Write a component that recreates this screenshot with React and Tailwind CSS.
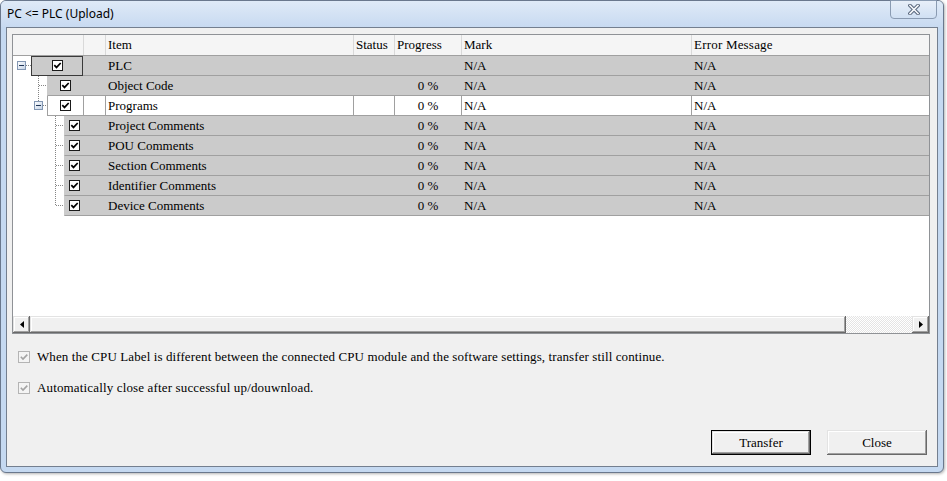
import React from "react";

// Raised 3D edge used by classic push buttons and scroll bar parts
const BEVEL =
  "bg-[#f0f0f0] shadow-[inset_-1px_-1px_0_#696969,inset_1px_1px_0_#e3e3e3,inset_-2px_-2px_0_#a0a0a0,inset_2px_2px_0_#ffffff]";

function Check() {
  return (
    <span className="flex h-[11px] w-[11px] items-center justify-center border border-[#1a1a1a] bg-white">
      <svg width="9" height="9" viewBox="0 0 9 9">
        <path d="M1.3 4.1 L3.5 6.4 L7.7 2" fill="none" stroke="#000" strokeWidth="1.7" />
      </svg>
    </span>
  );
}

function DisabledCheck() {
  return (
    <span className="flex h-[12px] w-[12px] flex-none items-center justify-center border border-[#b4b4b4] bg-[#f4f4f4]">
      <svg width="10" height="10" viewBox="0 0 10 10">
        <path d="M1.8 4.8 L4 7 L8.3 2.6" fill="none" stroke="#a3a3a3" strokeWidth="1.6" />
      </svg>
    </span>
  );
}

function Dots({ x1, y1, x2, y2 }) {
  return (
    <line
      x1={x1}
      y1={y1}
      x2={x2}
      y2={y2}
      stroke="#858585"
      strokeDasharray="1 1"
      shapeRendering="crispEdges"
    />
  );
}

function Expander({ x, y, id }) {
  return (
    <g>
      <defs>
        <linearGradient id={id} x1="0" y1="0" x2="1" y2="1">
          <stop offset="0" stopColor="#ffffff" />
          <stop offset="1" stopColor="#c3d2e6" />
        </linearGradient>
      </defs>
      <rect x={x + 0.5} y={y + 0.5} width="8" height="8" fill={`url(#${id})`} stroke="#8397b3" shapeRendering="crispEdges" />
      <line x1={x + 2} y1={y + 4.5} x2={x + 7} y2={y + 4.5} stroke="#1f3556" shapeRendering="crispEdges" />
    </g>
  );
}

// Tree connector drawings for the white gutter left of each row
function Gutter({ kind, last }) {
  if (kind === "root") {
    return (
      <svg width="18" height="20" className="flex-none">
        <Expander x={4} y={5} id="exp-root" />
        <Dots x1={13} y1={9.5} x2={18} y2={9.5} />
      </svg>
    );
  }
  if (kind === "leaf1") {
    return (
      <svg width="34" height="20" className="flex-none">
        <Dots x1={25.5} y1={0} x2={25.5} y2={20} />
        <Dots x1={26} y1={9.5} x2={34} y2={9.5} />
      </svg>
    );
  }
  if (kind === "node1") {
    return (
      <svg width="34" height="20" className="flex-none">
        <Dots x1={25.5} y1={0} x2={25.5} y2={5} />
        <Expander x={21} y={5} id="exp-programs" />
        <Dots x1={30} y1={9.5} x2={34} y2={9.5} />
      </svg>
    );
  }
  return (
    <svg width="51" height="20" className="flex-none">
      <Dots x1={42.5} y1={0} x2={42.5} y2={last ? 10 : 20} />
      <Dots x1={43} y1={9.5} x2={51} y2={9.5} />
    </svg>
  );
}

const rows = [
  { kind: "root", label: "PLC", cell: "w-[51px]", focus: true, progress: "" },
  { kind: "leaf1", label: "Object Code", cell: "w-[35px]" },
  { kind: "node1", label: "Programs", cell: "w-[35px]", white: true },
  { kind: "leaf2", label: "Project Comments", cell: "w-[18px]" },
  { kind: "leaf2", label: "POU Comments", cell: "w-[18px]" },
  { kind: "leaf2", label: "Section Comments", cell: "w-[18px]" },
  { kind: "leaf2", label: "Identifier Comments", cell: "w-[18px]" },
  { kind: "leaf2", label: "Device Comments", cell: "w-[18px]", last: true },
];

function Row({ row }) {
  const sep = row.white ? "border-[#a0a0a0]" : "border-transparent";
  const progress = row.progress === undefined ? "0 %" : row.progress;
  return (
    <div className="flex h-[20px]">
      <Gutter kind={row.kind} last={row.last} />
      <div
        className={`flex h-[20px] flex-1 border-b border-l border-b-[#a0a0a0] leading-[19px] ${
          row.white ? "bg-white border-l-[#a0a0a0]" : "bg-[#cbcbcb] border-l-[#cbcbcb]"
        }`}
      >
        <div className={`relative flex h-[19px] flex-none items-center justify-center ${row.cell}`}>
          {row.focus && <span className="absolute -left-px top-0 -bottom-px right-0 border border-[#3a3a3a]" />}
          <Check />
        </div>
        <div className={`h-[19px] w-[22px] flex-none border-l ${sep}`} />
        <div className={`h-[19px] w-[248px] flex-none border-l pl-[2px] ${sep}`}>{row.label}</div>
        <div className={`h-[19px] w-[41px] flex-none border-l ${sep}`} />
        <div className={`h-[19px] w-[67px] flex-none border-l text-center ${sep}`}>{progress}</div>
        <div className={`h-[19px] w-[230px] flex-none border-l pl-[2px] ${sep}`}>N/A</div>
        <div className={`h-[19px] flex-1 border-l pl-[2px] ${sep}`}>N/A</div>
      </div>
    </div>
  );
}

function Header() {
  const h = "h-[20px] flex-none border-l border-[#d9d9d9] pl-[2px]";
  return (
    <div className="flex h-[21px] border-b border-[#a0a0a0] bg-[#f5f5f5] leading-[20px]">
      <div className="h-[20px] w-[70px] flex-none" />
      <div className={`${h} w-[22px]`} />
      <div className={`${h} w-[248px]`}>Item</div>
      <div className={`${h} w-[41px]`}>Status</div>
      <div className={`${h} w-[67px]`}>Progress</div>
      <div className={`${h} w-[230px]`}>Mark</div>
      <div className="h-[20px] flex-1 border-l border-[#d9d9d9] pl-[2px] tracking-[0.2px]">Error Message</div>
    </div>
  );
}

function ScrollBar() {
  return (
    <div className="flex h-[17px] flex-none">
      <div className={`flex h-[17px] w-[17px] flex-none items-center justify-center ${BEVEL}`}>
        <svg width="4" height="7" viewBox="0 0 4 7">
          <path d="M4 0 L0 3.5 L4 7 Z" fill="#000" />
        </svg>
      </div>
      <div className={`h-[17px] w-[816px] flex-none ${BEVEL}`} />
      <div className="h-[17px] flex-1 bg-[repeating-conic-gradient(#e4e4e4_0%_25%,#ffffff_0%_50%)] bg-[length:2px_2px]" />
      <div className={`flex h-[17px] w-[17px] flex-none items-center justify-center ${BEVEL}`}>
        <svg width="4" height="7" viewBox="0 0 4 7">
          <path d="M0 0 L4 3.5 L0 7 Z" fill="#000" />
        </svg>
      </div>
    </div>
  );
}

function CloseGlyph() {
  return (
    <svg width="12" height="11" viewBox="0 0 12 11">
      <path d="M2 1.5 L10 9.5 M10 1.5 L2 9.5" stroke="#56647a" strokeWidth="3.6" strokeLinecap="square" />
      <path d="M2 1.5 L10 9.5 M10 1.5 L2 9.5" stroke="#f7f9fc" strokeWidth="1.6" strokeLinecap="square" />
    </svg>
  );
}

export default function App() {
  return (
    <div className="h-[481px] w-[947px] overflow-hidden bg-white">
      <div className="flex h-[473px] w-[944px] flex-col rounded-[6px] border border-[#6a788d] bg-[#c5d9f1] shadow-[1px_1px_3px_rgba(0,0,0,0.3)]">
        <div className="flex h-[26px] flex-none rounded-t-[5px] bg-gradient-to-b from-[#dfeaf7] to-[#c8daf1]">
          <div className="flex-1 pl-[6px] font-['Noto_Sans',sans-serif] text-[12px] leading-[26px] text-black">
            PC &lt;= PLC (Upload)
          </div>
          <div className="mr-[6px] -mt-px flex h-[19px] w-[47px] items-center justify-center rounded-b-[4px] border border-[#8a9bb2] bg-gradient-to-b from-[#e8eff9] to-[#d0e0f3]">
            <CloseGlyph />
          </div>
        </div>

        <div className="mx-[5px] mb-[5px] flex flex-1 flex-col border border-[#747f8f] bg-[#f0f0f0] font-['Liberation_Serif',serif] text-[13px] text-black">
          <div className="mt-[6px] ml-[5px] mr-[7px] flex h-[300px] flex-none flex-col border border-[#8f9296] bg-white">
            <Header />
            {rows.map((r) => (
              <Row key={r.label} row={r} />
            ))}
            <div className="flex-1" />
            <ScrollBar />
          </div>

          <div className="mt-[16px] flex h-[13px] items-center gap-[7px] pl-[11px]">
            <DisabledCheck />
            <span className="leading-[13px] tracking-[0.1px]">
              When the CPU Label is different between the connected CPU module and the software settings, transfer still continue.
            </span>
          </div>
          <div className="mt-[18px] flex h-[13px] items-center gap-[7px] pl-[11px]">
            <DisabledCheck />
            <span className="leading-[13px] tracking-[0.15px]">Automatically close after successful up/douwnload.</span>
          </div>

          <div className="mt-auto flex justify-end gap-[16px] pr-[10px] pb-[11px]">
            <div className="h-[25px] w-[100px] border border-black">
              <div className={`flex h-full w-full items-center justify-center ${BEVEL}`}>Transfer</div>
            </div>
            <div className={`flex h-[25px] w-[100px] items-center justify-center ${BEVEL}`}>Close</div>
          </div>
        </div>
      </div>
    </div>
  );
}
